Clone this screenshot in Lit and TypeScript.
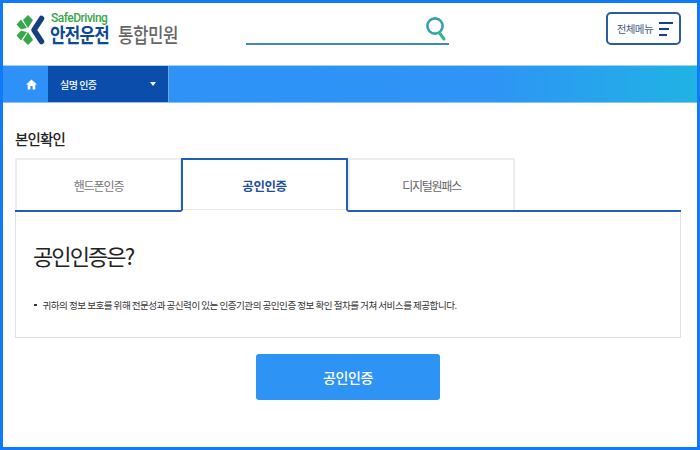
import { LitElement, html, css } from "lit";
import { customElement } from "lit/decorators.js";

@customElement("app-root")
export class AppRoot extends LitElement {
  static styles = css`
    :host { display: block; width: 700px; height: 450px; overflow: hidden; background: #fff;
      font-family: "Noto Sans CJK KR", "Noto Sans", sans-serif; }
    * { box-sizing: border-box; }
    .frame { width: 700px; height: 450px; border: 3px solid #0f7bfb; display: flex; flex-direction: column; background: #fff; }
    .header { height: 62px; flex: none; display: flex; align-items: flex-start; position: relative; }
    .logo { width: 243px; flex: none; display: flex; padding: 9px 0 0 12px; gap: 4px; }
    .logo svg { flex: none; margin-top: 2px; }
    .logo-text { display: flex; flex-direction: column; }
    .sd { font: 500 12px/13px Roboto, sans-serif; color: #3aa64a; letter-spacing: -.5px; }
    .brand { display: flex; gap: 6px; align-items: baseline; line-height: 22px; margin-top: -1px; margin-left: -1px; }
    .b1, .b2 { display: block; font-size: 20px; white-space: nowrap; transform: scaleX(.84); transform-origin: left; letter-spacing: -.8px; }
    .b1 { width: 62px; font-weight: 700; color: #0e4a94; }
    .b2 { width: 64px; font-weight: 500; color: #666; letter-spacing: -.5px; }
    .search { width: 203px; height: 31px; margin-top: 11px; border-bottom: 2px solid #3f8bb5; display: flex; justify-content: flex-end; padding-right: 2px; flex: none; }
    .menu-btn { margin: 9px 16px 0 auto; width: 75px; height: 33px; border: 2px solid #2a5d9f; border-radius: 5px; display: flex; align-items: center; justify-content: flex-end; gap: 6px; padding-right: 6px; font-size: 10.5px; letter-spacing: -.6px; color: #3f5a86; background: #fff; }
    .bars { display: flex; flex-direction: column; gap: 4px; align-items: flex-start; }
    .bars i { display: block; height: 2px; background: #0f3f97; }
    .nav { height: 38px; flex: none; display: flex; background: linear-gradient(90deg, #2e91f7 0%, #2e94f5 70%, #20b3e4 100%); border-top: 1px solid #a8d3e4; border-bottom: 1px solid #8cc4ea; }
    .home { width: 45px; display: flex; align-items: center; justify-content: center; padding-left: 11px; }
    .crumb { width: 121px; background: #0b4dab; border-right: 1px solid #6aa9e6; display: flex; align-items: center; justify-content: space-between; padding: 0 12px; color: #fff; font-size: 10px; font-weight: 500; letter-spacing: -.5px; }
    .caret { width: 0; height: 0; border-left: 3.5px solid transparent; border-right: 3.5px solid transparent; border-top: 4px solid #fff; }
    .main { padding: 24px 16px 0 12px; display: flex; flex-direction: column; flex: 1; }
    h2 { margin: 0; font-size: 14.5px; line-height: 24px; height: 31px; font-weight: 500; color: #222; letter-spacing: -.8px; }
    .tabs { display: flex; height: 54px; flex: none; border-bottom: 2px solid #1f5fb5; }
    .tab { height: 52px; width: 167px; margin-right: -1px; display: flex; align-items: center; justify-content: center; font-size: 12px; color: #777; letter-spacing: -1.1px; border: 2px solid #ececec; border-bottom: 0; }
    .tab:nth-child(3) { color: #666; letter-spacing: -1.3px; }
    .tab.active { width: 167px; height: 54px; margin-right: 0; border: 2px solid #1f5fb5; border-bottom: 2px solid #fff; color: #1c4f9c; font-size: 12.5px; letter-spacing: -.4px; font-weight: 700; z-index: 1; background: #fff; box-shadow: inset 0 -1px 0 #e6e6e6; }
    .panel { height: 126px; flex: none; border: 1px solid #e2e2e2; border-top: 0; padding: 26px 18px 0; }
    .panel h3 { margin: 0 0 0 -1px; font-size: 22px; line-height: 34px; font-weight: 400; color: #222; letter-spacing: -1.9px; }
    .panel ul { margin: 25px 0 0; padding: 0; list-style: none; }
    .panel li { font-size: 9.6px; line-height: 16px; color: #333; display: flex; gap: 6px; letter-spacing: -.54px; align-items: center; white-space: nowrap; }
    .panel li::before { content: ""; width: 2.5px; height: 2.5px; background: #333; flex: none; }
    .action { margin: 16px 0 0 241px; width: 184px; height: 46px; border-radius: 3px; background: #2d93f5; color: #fff; border: 0; font: 500 14px "Noto Sans CJK KR", sans-serif; letter-spacing: -.4px; }
  `;

  render() {
    return html`<div class="frame">
      <header class="header">
        <div class="logo">
          <svg width="32" height="32" viewBox="15 14 32 32">
            <g fill="#34a84b">
              <path d="M28 15 L33 20 L28 28 L23 20 Z" />
              <path d="M21 19.5 L27 28 L21 29.2 L16.5 24.5 Z" />
              <path d="M21 40.5 L27 32 L21 30.8 L16.5 35.5 Z" />
              <path d="M28 45 L33 40 L28 32 L23 40 Z" />
            </g>
            <path d="M41.5 18.5 L34 30 L41.5 41.5" fill="none" stroke="#173f7e" stroke-width="5.5" stroke-linejoin="round" stroke-linecap="round" />
          </svg>
          <div class="logo-text">
            <span class="sd">SafeDriving</span>
            <div class="brand"><span class="b1">안전운전</span><span class="b2">통합민원</span></div>
          </div>
        </div>
        <div class="search">
          <svg width="22" height="28" viewBox="0 0 22 28" style="margin-top:1px">
            <circle cx="10" cy="11" r="7.6" fill="none" stroke="#35a0b4" stroke-width="2.6" />
            <path d="M14.5 18 L19 24" stroke="#38b48c" stroke-width="3" stroke-linecap="round" />
          </svg>
        </div>
        <div class="menu-btn">전체메뉴
          <div class="bars"><i style="width:14px"></i><i style="width:10px"></i><i style="width:8px"></i></div>
        </div>
      </header>
      <nav class="nav">
        <div class="home">
          <svg width="11" height="11" viewBox="0 0 11 11"><path d="M5.5 .5 L11 5.5 H9.3 V10.5 H6.6 V7 H4.4 V10.5 H1.7 V5.5 H0 Z" fill="#fff" /></svg>
        </div>
        <div class="crumb"><span>실명 인증</span><span class="caret"></span></div>
      </nav>
      <main class="main">
        <h2>본인확인</h2>
        <div class="tabs">
          <div class="tab">핸드폰인증</div>
          <div class="tab active">공인인증</div>
          <div class="tab">디지털원패스</div>
        </div>
        <section class="panel">
          <h3>공인인증은?</h3>
          <ul><li>귀하의 정보 보호를 위해 전문성과 공신력이 있는 인증기관의 공인인증 정보 확인 절차를 거쳐 서비스를 제공합니다.</li></ul>
        </section>
        <button class="action">공인인증</button>
      </main>
    </div>`;
  }
}
